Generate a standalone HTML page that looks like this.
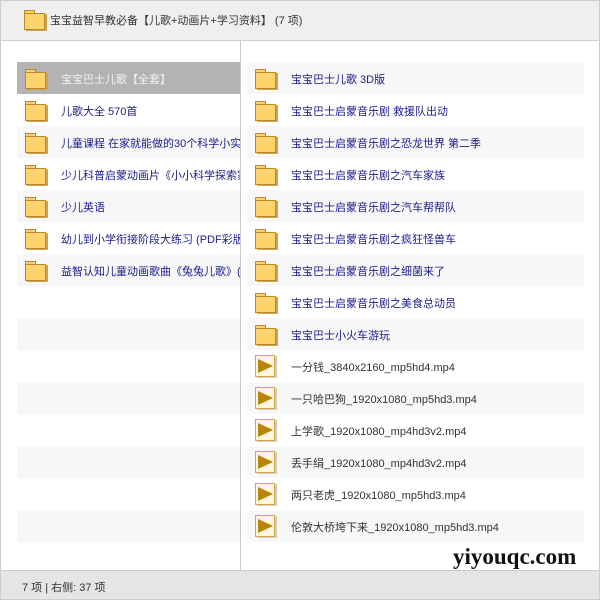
<!DOCTYPE html><html><head><meta charset="utf-8"><style>
*{margin:0;padding:0;box-sizing:border-box}
body{width:600px;height:600px;background:#fff;font-family:"Liberation Sans","Noto Sans CJK SC",sans-serif;font-size:11px;position:relative;overflow:hidden}
.frame{position:absolute;left:0;top:0;width:600px;height:600px;border:1px solid #ccc;pointer-events:none}
.hdr{position:absolute;left:0;top:0;width:600px;height:41px;background:#efefef;border-bottom:1px solid #ccc}
.hdr .t{position:absolute;left:50px;top:12px;color:#333}
.div{position:absolute;left:240px;top:41px;width:1px;height:529px;background:#ccc}
.ftr{position:absolute;left:0;top:570px;width:600px;height:30px;background:#e5e5e5;border-top:1px solid #ccc}
.ftr span{position:absolute;left:22px;top:8px;color:#333}
.row{position:absolute;height:32px;overflow:hidden;white-space:nowrap}
.row.s{background:#f7f7f7}
.row.sel{background:#b3b3b3}
.row .tx{position:absolute;top:9px;color:#1c1c8c}
.row.sel .tx{color:#f2f2f2}
.row .f{color:#333}
.fold{position:absolute;width:21px;height:19px}
.fold:before{content:"";position:absolute;left:0;top:0;width:9px;height:4px;background:#ffd36b;border:1px solid #b8892a;border-bottom:none}
.fold:after{content:"";position:absolute;left:0;top:3px;width:19px;height:15px;background:#ffd36b;border:1px solid #b8892a;box-shadow:2px 1px 0 #c9a35a}
.vid{position:absolute;width:20px;height:22px;background:#fff8dc;border:1px solid #d9a441;box-shadow:2px 1px 0 #ccc}
.vid:after{content:"";position:absolute;left:2px;top:3px;border-left:15px solid #b8860b;border-top:7px solid transparent;border-bottom:7px solid transparent}
.wm{position:absolute;left:453px;top:544px;font:bold 23px "Liberation Serif",serif;color:#111}
</style></head><body>
<div class="hdr"><div class="fold" style="left:24px;top:10px"></div><span class="t">宝宝益智早教必备【儿歌+动画片+学习资料】 (7 项)</span></div>
<div class="div"></div>
<div id="L"></div><div id="R"></div>
<div class="wm">yiyouqc.com</div>
<div class="ftr"><span>7 项 | 右侧: 37 项</span></div>
<div class="frame"></div>
<script>
var L=["宝宝巴士儿歌【全套】","儿歌大全 570首","儿童课程 在家就能做的30个科学小实验","少儿科普启蒙动画片《小小科学探索家》","少儿英语","幼儿到小学衔接阶段大练习 (PDF彩版)","益智认知儿童动画歌曲《兔兔儿歌》(全集)"];
var R=["宝宝巴士儿歌 3D版","宝宝巴士启蒙音乐剧 救援队出动","宝宝巴士启蒙音乐剧之恐龙世界 第二季","宝宝巴士启蒙音乐剧之汽车家族","宝宝巴士启蒙音乐剧之汽车帮帮队","宝宝巴士启蒙音乐剧之疯狂怪兽车","宝宝巴士启蒙音乐剧之细菌来了","宝宝巴士启蒙音乐剧之美食总动员","宝宝巴士小火车游玩","一分钱_3840x2160_mp5hd4.mp4","一只哈巴狗_1920x1080_mp5hd3.mp4","上学歌_1920x1080_mp4hd3v2.mp4","丢手绢_1920x1080_mp4hd3v2.mp4","两只老虎_1920x1080_mp5hd3.mp4","伦敦大桥垮下来_1920x1080_mp5hd3.mp4"];
var h="";
for(var i=0;i<15;i++){var y=62+i*32;var c=i==0?"sel":(i%2==0?"s":"");
h+='<div class="row '+c+'" style="left:17px;width:223px;top:'+y+'px">'+(i<7?'<div class="fold" style="left:8px;top:7px"></div><span class="tx" style="left:44px">'+L[i]+'</span>':'')+'</div>';}
for(var i=0;i<15;i++){var y=62+i*32;var c=i%2==0?"s":"";var v=i>=9;
h+='<div class="row '+c+'" style="left:247px;width:337px;top:'+y+'px">'+(v?'<div class="vid" style="left:8px;top:5px"></div>':'<div class="fold" style="left:8px;top:7px"></div>')+'<span class="tx'+(v?' f':'')+'" style="left:44px">'+R[i]+'</span></div>';}
document.getElementById("L").innerHTML=h;
</script>
</body></html>
